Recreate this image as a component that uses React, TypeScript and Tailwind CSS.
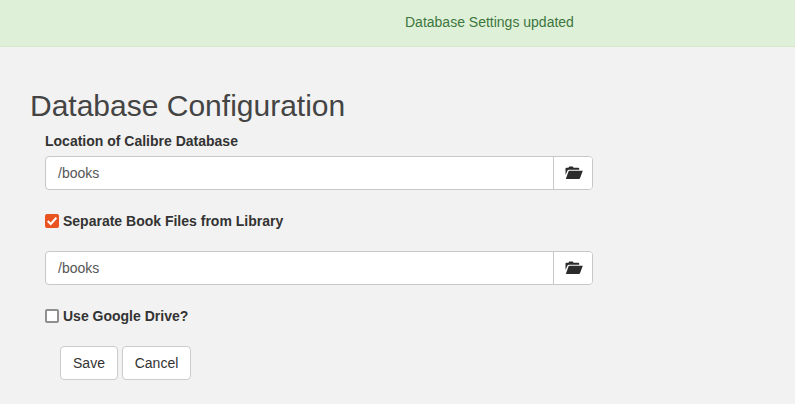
import React, { useState } from "react";

function FolderOpen() {
  return (
    <svg width="18" height="14" viewBox="0 0 18 14" fill="#2b2b2b" aria-hidden="true" className="ml-px">
      <path d="M.5 9V2.6C.5 2 .9 1.7 1.4 1.7h2L4.2.6h3.6l.8 1.1h4.6c.6 0 1 .3 1 .9v1.1H3.9c-.7 0-1.1.3-1.4.9Z" />
      <path d="M4.4 4.7h13.4L15 12.2c-.2.6-.5.8-1.1.8H.8l2.7-7.6c.2-.5.4-.7.9-.7Z" />
    </svg>
  );
}

function PathField({ label }: { label: string }) {
  const [value, setValue] = useState("/books");
  return (
    <div className="flex h-[34px] w-[548px] overflow-hidden rounded border border-[#c8c8c8] bg-white">
      <input
        aria-label={label}
        value={value}
        onChange={(e) => setValue(e.target.value)}
        className="min-w-0 flex-1 px-3 text-[14px] leading-5 text-[#555] outline-none"
      />
      <button aria-label="Browse" className="flex w-[39px] items-center justify-center border-l border-[#c8c8c8] bg-white">
        <FolderOpen />
      </button>
    </div>
  );
}

function CheckRow({ label, initial }: { label: string; initial: boolean }) {
  const [checked, setChecked] = useState(initial);
  return (
    <label className="flex h-5 items-center gap-1 text-[14px] leading-5 font-bold">
      <input type="checkbox" className="sr-only" checked={checked} onChange={() => setChecked(!checked)} />
      {checked ? (
        <span className="flex size-3.5 items-center justify-center rounded-[2px] bg-[#e95420]">
          <svg width="14" height="14" viewBox="0 0 14 14" fill="none" stroke="#fff" strokeWidth="2">
            <path d="m2.7 7 3 3L11.4 3.8" />
          </svg>
        </span>
      ) : (
        <span className="size-3.5 rounded-[2px] border-2 border-[#8f8f91] bg-white" />
      )}
      <span>{label}</span>
    </label>
  );
}

export default function App() {
  const button = "h-[34px] rounded border border-[#ccc] bg-white text-[14px] leading-5 text-[#333]";
  return (
    <div className="h-[404px] overflow-hidden bg-[#f2f2f2] font-['Liberation_Sans',Arial,sans-serif] text-[14px] leading-5 text-[#333]">
      <div className="h-[47px] border-b border-[#d6e9c6] bg-[#dff0d8] pt-3 pl-[405px] whitespace-nowrap text-[#3c763d]">
        Database Settings updated
      </div>
      <main className="px-[30px] pt-[42px]">
        <h1 className="h-[42px] text-[30px] leading-[33px] text-[#444]">Database Configuration</h1>
        <form className="pl-[15px]" onSubmit={(e) => e.preventDefault()}>
          <div className="mb-[5px] font-bold">Location of Calibre Database</div>
          <PathField label="Location of Calibre Database" />
          <div className="mt-[21px] mb-5">
            <CheckRow label="Separate Book Files from Library" initial={true} />
          </div>
          <PathField label="Book Files" />
          <div className="mt-[21px]">
            <CheckRow label="Use Google Drive?" initial={false} />
          </div>
          <div className="mt-5 flex gap-1 pl-[15px]">
            <button className={button + " w-[58px]"}>Save</button>
            <button className={button + " w-[69px]"}>Cancel</button>
          </div>
        </form>
      </main>
    </div>
  );
}
